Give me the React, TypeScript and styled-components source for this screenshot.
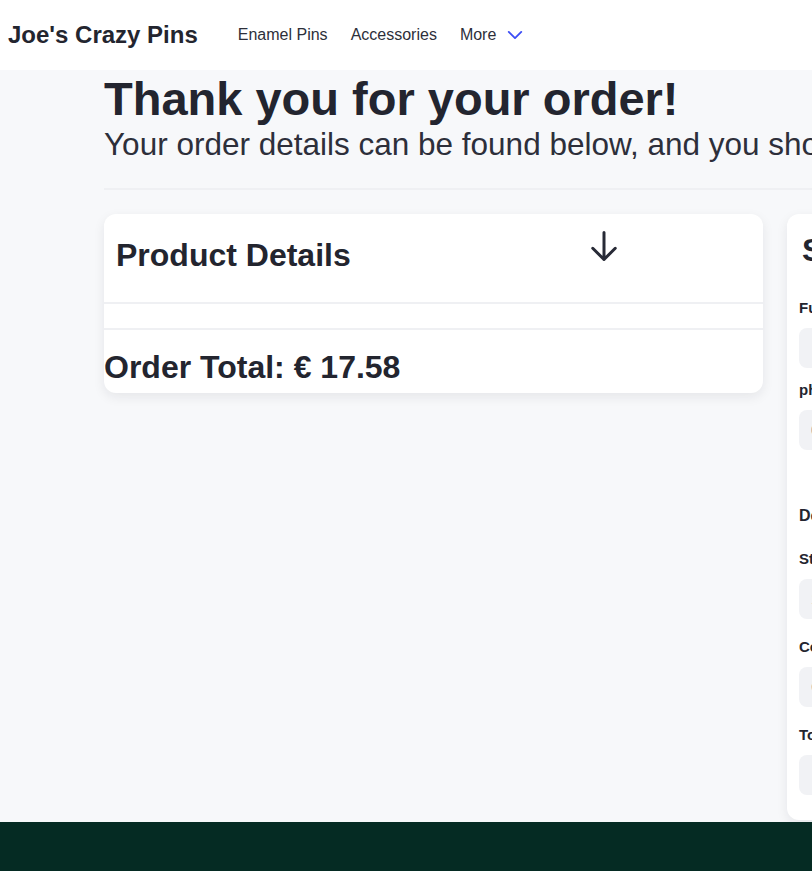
import React from "react";
import styled, { createGlobalStyle } from "styled-components";

const GlobalStyle = createGlobalStyle`
  * {
    box-sizing: border-box;
  }
  body {
    margin: 0;
    background: #f7f8fa;
    font-family: "Liberation Sans", Arial, sans-serif;
    color: #23252f;
    overflow: hidden;
  }
`;

const Page = styled.div`
  display: flex;
  flex-flow: column;
  min-height: 100vh;
`;

const Nav = styled.nav`
  height: 70px;
  background: #ffffff;
  display: flex;
  align-items: center;
  padding-left: 8px;
`;

const Logo = styled.a`
  font-size: 24px;
  font-weight: 700;
  color: #23252f;
  margin-right: 40px;
`;

const NavLinks = styled.div`
  display: flex;
  align-items: center;
  gap: 23px;
`;

const NavLink = styled.a`
  font-size: 16px;
  color: #2d2f3a;
  display: flex;
  align-items: center;
  gap: 9px;
`;

const Main = styled.main`
  flex: 1;
  padding: 5px 0 2px 104px;
  white-space: nowrap;
`;

const Title = styled.h1`
  margin: 0;
  font-size: 47px;
  line-height: 48px;
  font-weight: 700;
`;

const Subtitle = styled.p`
  margin: 3px 0 0;
  font-size: 31.5px;
  line-height: 36px;
  color: #2d2f3a;
`;

const Divider = styled.hr`
  margin: 26px 0 24px;
  border: none;
  height: 2px;
  background: #eff0f3;
`;

const Columns = styled.div`
  display: grid;
  grid-template-columns: 659px 659px;
  gap: 24px;
  align-items: start;
`;

const Card = styled.section`
  background: #ffffff;
  border-radius: 12px;
  box-shadow: 0 4px 12px rgba(20, 24, 40, 0.08);
  overflow: hidden;
`;

const CardHeader = styled.div`
  display: flex;
  align-items: flex-start;
  height: 90px;
  padding: 21px 12px 0;
  border-bottom: 2px solid #eff0f3;
`;

const CardTitle = styled.h2`
  margin: 0;
  font-size: 32px;
  line-height: 40px;
  font-weight: 700;
`;

const ToggleButton = styled.button`
  margin: -7px 129px 0 auto;
  padding: 0;
  border: none;
  background: none;
  color: #272a36;
  display: flex;
`;

const CardBody = styled.div`
  height: 26px;
  border-bottom: 2px solid #eff0f3;
`;

const Total = styled.h2`
  margin: 0;
  padding: 19px 0 8px;
  font-size: 32px;
  line-height: 36px;
  font-weight: 700;
`;

const Form = styled.div`
  padding: 16px 12px 7px;
`;

const FormTitle = styled.h2`
  margin: 0 0 28px;
  padding-left: 3px;
  font-size: 32px;
  line-height: 40px;
  font-weight: 700;
`;

const Section = styled.h3`
  margin: 54px 0 21px;
  font-size: 16px;
  line-height: 24px;
  font-weight: 700;
`;

const Field = styled.div<{ $tight?: boolean }>`
  display: flex;
  flex-flow: column;
  gap: 10px;
  margin-bottom: ${(p) => (p.$tight ? 12 : 18)}px;
`;

const Label = styled.label`
  font-size: 15px;
  line-height: 20px;
  font-weight: 700;
  color: #23252f;
`;

const Input = styled.input`
  height: 40px;
  width: 100%;
  border: none;
  outline: none;
  border-radius: 8px;
  background: #f1f2f5;
  padding-left: 12px;
  font-size: 14px;
  font-family: inherit;
  color: #8a8d99;
`;

const Footer = styled.footer`
  height: 120px;
  background: #052b23;
`;

const ArrowDown = () => (
  <svg width="36" height="36" viewBox="0 0 24 24" fill="none" stroke="currentColor" strokeWidth={2} strokeLinecap="round" strokeLinejoin="round">
    <path d="M19.5 13.5 12 21m0 0-7.5-7.5M12 21V3" />
  </svg>
);

const ChevronDown = () => (
  <svg width="20" height="20" viewBox="0 0 24 24" fill="none" stroke="#3d4ef5" strokeWidth={2.2} strokeLinecap="round" strokeLinejoin="round">
    <path d="m19.5 8.25-7.5 7.5-7.5-7.5" />
  </svg>
);

const App = () => {
  return (
    <Page>
      <GlobalStyle />
      <Nav>
        <Logo>Joe's Crazy Pins</Logo>
        <NavLinks>
          <NavLink>Enamel Pins</NavLink>
          <NavLink>Accessories</NavLink>
          <NavLink>
            More
            <ChevronDown />
          </NavLink>
        </NavLinks>
      </Nav>
      <Main>
        <Title>Thank you for your order!</Title>
        <Subtitle>
          Your order details can be found below, and you should receive a confirmation email shortly.
        </Subtitle>
        <Divider />
        <Columns>
          <Card>
            <CardHeader>
              <CardTitle>Product Details</CardTitle>
              <ToggleButton aria-label="Show products">
                <ArrowDown />
              </ToggleButton>
            </CardHeader>
            <CardBody />
            <Total>Order Total: € 17.58</Total>
          </Card>
          <Card>
            <Form>
              <FormTitle>Shipping Details</FormTitle>
              <Field $tight>
                <Label>Full name</Label>
                <Input readOnly value="" />
              </Field>
              <Field>
                <Label>phone</Label>
                <Input readOnly value="0" />
              </Field>
              <Section>Delivery Address</Section>
              <Field>
                <Label>Street</Label>
                <Input readOnly value="1" />
              </Field>
              <Field>
                <Label>County</Label>
                <Input readOnly value="C" />
              </Field>
              <Field>
                <Label>Town</Label>
                <Input readOnly value="" />
              </Field>
            </Form>
          </Card>
        </Columns>
      </Main>
      <Footer />
    </Page>
  );
};

export default App;
